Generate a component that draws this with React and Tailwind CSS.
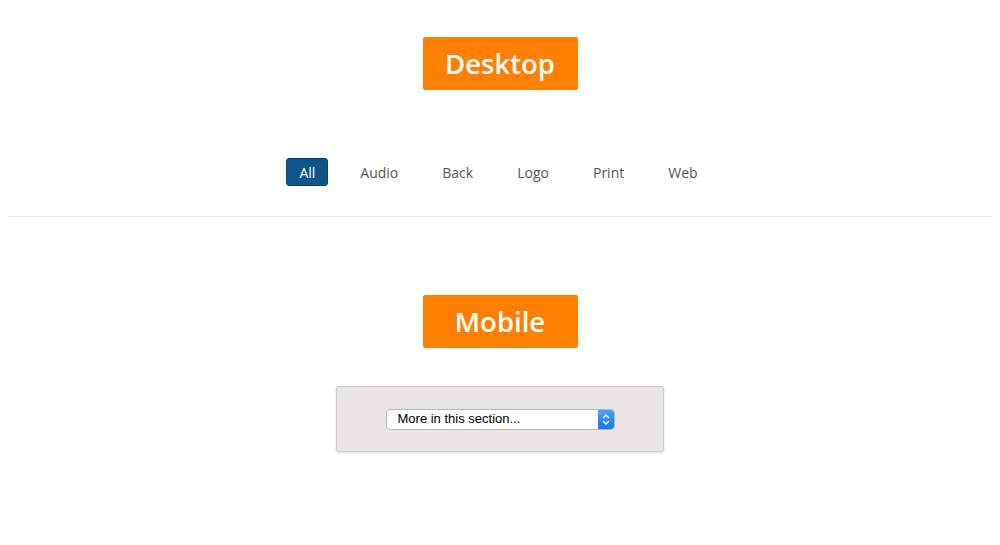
import React from "react";

const tabs = ["All", "Audio", "Back", "Logo", "Print", "Web"];

const Badge = ({ children }) => (
    <div className="w-[155px] h-[53px] bg-[#ff8000] rounded-[2px] flex items-center justify-center text-white text-[27.5px] font-semibold font-['Open_Sans',sans-serif]">
        {children}
    </div>
);

const App = () => {
    return (
        <div className="w-[1000px] h-[545px] bg-white font-['Open_Sans',sans-serif] px-2 overflow-hidden">

            {/* Desktop */}
            <div className="flex justify-center pt-[37px]">
                <Badge>Desktop</Badge>
            </div>

            <div className="flex justify-center gap-[20px] mt-[68px] pr-[4px]">
                {tabs.map((tab) => (
                    <span
                        key={tab}
                        className={
                            tab === "All"
                                ? "h-[28px] px-3 flex items-center rounded-[3px] bg-[#0b5589] border border-[#07446f] text-white text-[14px]"
                                : "h-[28px] px-3 flex items-center text-[#555555] text-[14px]"
                        }
                    >
                        {tab}
                    </span>
                ))}
            </div>

            <div className="mt-[30px] border-t border-[#e6e6e6]" />

            {/* Mobile */}
            <div className="flex justify-center mt-[78px]">
                <Badge>Mobile</Badge>
            </div>

            <div className="flex justify-center mt-[38px]">
                <div className="w-[328px] h-[66px] bg-[#e7e6e4] border border-[#cbcbcb] rounded-[3px] shadow-[0_1px_3px_rgba(0,0,0,0.15)] flex items-center justify-center">
                    <div className="w-[229px] h-[21px] flex bg-white border border-[#b8b8b8] rounded-[4px] overflow-hidden">
                        <span className="flex-1 pl-[11px] flex items-center text-[13px] text-black font-['Liberation_Sans',Arial,sans-serif]">
                            More in this section...
                        </span>
                        <span className="w-[16px] bg-gradient-to-b from-[#4aa0fb] to-[#1a72f0] flex items-center justify-center">
                            <svg width="8" height="13" viewBox="0 0 8 13" fill="none" stroke="white" strokeWidth="1.4" strokeLinecap="round" strokeLinejoin="round">
                                <path d="M1.5 4.5 L4 2 L6.5 4.5" />
                                <path d="M1.5 8.5 L4 11 L6.5 8.5" />
                            </svg>
                        </span>
                    </div>
                </div>
            </div>
        </div>
    );
};

export default App;
